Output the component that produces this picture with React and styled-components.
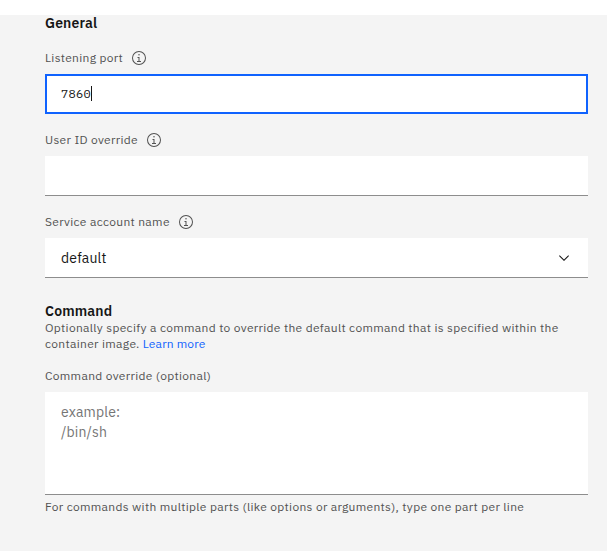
import React from "react";
import styled, { createGlobalStyle } from "styled-components";

const GlobalStyle = createGlobalStyle`
  *, *::before, *::after { box-sizing: border-box; }
  body {
    margin: 0;
    background: #fff;
    font-family: "IBM Plex Sans", Roboto, "Liberation Sans", sans-serif;
    color: #161616;
  }
`;

const Page = styled.main`
  padding-top: 15px;
  height: 551px;
  overflow: hidden;
`;

const Panel = styled.div`
  height: 536px;
  padding: 0 19px 0 45px;
  background: #f4f4f4;
`;

const Section = styled.section`
  display: flex;
  flex-direction: column;
`;

const Heading = styled.h2`
  margin: 0 0 ${(p) => p.$gap || 0}px;
  font-size: 14px;
  font-weight: 600;
  line-height: ${(p) => p.$line || 18}px;
  letter-spacing: 0.16px;
`;

const Field = styled.div`
  display: flex;
  flex-direction: column;
  height: ${(p) => p.$height || 82}px;
`;

const Label = styled.label`
  display: flex;
  align-items: center;
  height: 16px;
  margin-bottom: 8px;
  color: #525252;
  font-size: 12px;
  line-height: 16px;
  letter-spacing: 0.32px;
  white-space: nowrap;
`;

const LabelText = styled.span`
  width: ${(p) => p.$width}px;
  margin-right: 8px;
`;

const InfoIcon = styled.svg`
  flex: none;
  width: 16px;
  height: 16px;
  fill: #525252;
`;

const InputBox = styled.div`
  display: flex;
  align-items: center;
  height: 40px;
  padding: 0 16px;
  background: #fff;
  border-bottom: 1px solid #8d8d8d;
`;

const FocusedBox = styled(InputBox)`
  width: 543px;
  padding: 0 14px 1px;
  border: 2px solid #0f62fe;
  font-family: "IBM Plex Mono", "Liberation Mono", monospace;
  font-size: 12px;
  line-height: 15px;
  letter-spacing: 0.32px;
`;

const Caret = styled.span`
  width: 1px;
  height: 15px;
  background: #161616;
`;

const SelectBox = styled(InputBox)`
  justify-content: space-between;
  font-size: 14px;
  letter-spacing: 0.16px;
`;

const Chevron = styled.svg`
  width: 16px;
  height: 16px;
  fill: #161616;
`;

const Description = styled.p`
  margin: 0 0 16px;
  color: #525252;
  font-size: 12px;
  line-height: 16px;
  letter-spacing: 0.32px;
  white-space: nowrap;
`;

const Link = styled.a`
  color: #0f62fe;
  letter-spacing: 0.16px;
  text-decoration: none;
`;

const TextArea = styled.div`
  height: 103px;
  padding: 10px 16px;
  background: #fff;
  border-bottom: 1px solid #8d8d8d;
  color: #757575;
  font-size: 14px;
  line-height: 20px;
  letter-spacing: 0.16px;
`;

const Helper = styled.div`
  margin-top: 4px;
  color: #525252;
  font-size: 12px;
  line-height: 16px;
  letter-spacing: 0.32px;
  white-space: nowrap;
`;

function Info() {
  return (
    <InfoIcon viewBox="0 0 32 32" aria-hidden="true">
      <path d="M17 22V14H13v2h2v6H12v2h8V22zM16 8a1.5 1.5 0 1 0 1.5 1.5A1.5 1.5 0 0 0 16 8z" />
      <path d="M16 30A14 14 0 1 1 30 16 14 14 0 0 1 16 30ZM16 4A12 12 0 1 0 28 16 12 12 0 0 0 16 4Z" />
    </InfoIcon>
  );
}

export default function App() {
  return (
    <>
      <GlobalStyle />
      <Page>
        <Panel>
          <Section>
            <Heading $line={16} $gap={19}>General</Heading>
            <Field>
              <Label>
                <LabelText $width={78}>Listening port</LabelText>
                <Info />
              </Label>
              <FocusedBox>
                7860
                <Caret />
              </FocusedBox>
            </Field>
            <Field>
              <Label>
                <LabelText $width={93}>User ID override</LabelText>
                <Info />
              </Label>
              <InputBox />
            </Field>
            <Field $height={88}>
              <Label>
                <LabelText $width={125}>Service account name</LabelText>
                <Info />
              </Label>
              <SelectBox>
                default
                <Chevron viewBox="0 0 16 16" aria-hidden="true">
                  <path d="M8 11L3 6 3.7 5.3 8 9.6 12.3 5.3 13 6z" />
                </Chevron>
              </SelectBox>
            </Field>
          </Section>
          <Section>
            <Heading>Command</Heading>
            <Description>
              Optionally specify a command to override the default command that is specified within the
              <br />
              container image. <Link>Learn more</Link>
            </Description>
            <Label>Command override (optional)</Label>
            <TextArea>
              example:
              <br />
              /bin/sh
            </TextArea>
            <Helper>
              For commands with multiple parts (like options or arguments), type one part per line
            </Helper>
          </Section>
        </Panel>
      </Page>
    </>
  );
}
